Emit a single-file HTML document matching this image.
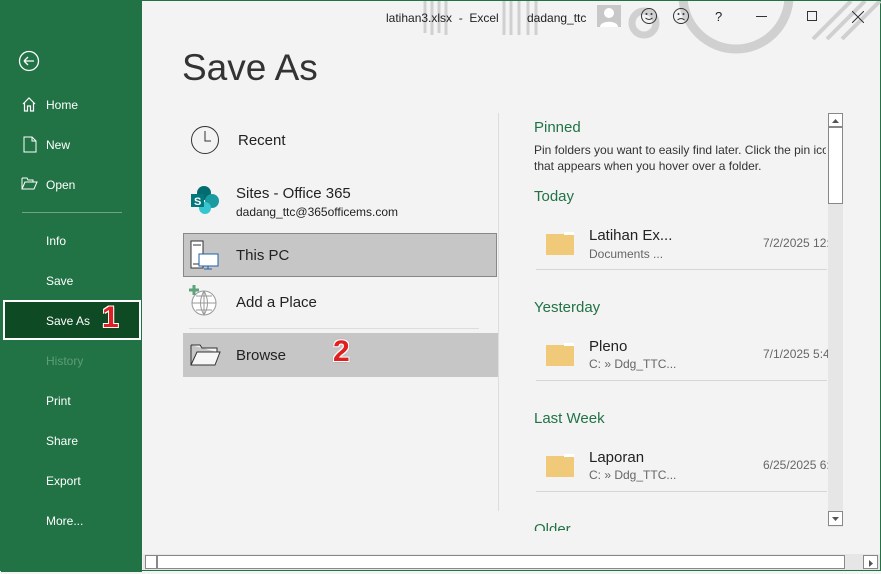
<!DOCTYPE html><html><head><style>
*{margin:0;padding:0;box-sizing:border-box}
body{width:881px;height:571px;overflow:hidden;background:#f3f3f3;font-family:"Liberation Sans",sans-serif;position:relative;border:1px solid #217346}
.a{position:absolute;white-space:nowrap}
.side{position:absolute;left:0;top:0;width:141px;height:571px;background:#217346}
.side .a{color:#fff;font-size:12px}
.g{color:#217346}
.d{color:#222}
.num{font-size:30px!important;font-weight:bold;color:#e02020!important;text-shadow:-1px -1px 0 #fff,1px -1px 0 #fff,-1px 1px 0 #fff,1px 1px 0 #fff,0 0 2px #600}
</style></head><body>
<svg class="a" style="left:0;top:0" width="881" height="60"><g stroke="#d0d0d0" fill="none"><path d="M424 0v32M431 0v34M438 0v32M445 0v34" stroke-width="3"/><path d="M503 0v34M510 0v34M518 0v34M527 0v34M535 0v34" stroke-width="3"/><circle cx="735" cy="-5" r="53" stroke-width="9"/><circle cx="643" cy="22" r="12" stroke-width="7"/><path d="M812 38l38-38M826 38l38-38M841 38l38-38" stroke-width="4"/></g></svg>
<div class="side">
<svg class="a" style="left:17px;top:49px" width="22" height="22"><circle cx="11" cy="11" r="9.5" fill="none" stroke="#fff" stroke-width="1.3"/><path d="M6 11h10M6 11l4-4M6 11l4 4" stroke="#fff" stroke-width="1.3" fill="none"/></svg>
<svg class="a" style="left:20px;top:95px" width="16" height="16"><path d="M2 8L8 2l6 6M3.5 7v8h3v-5h3v5h3V7" stroke="#fff" fill="none" stroke-width="1.2"/></svg>
<div class="a" style="left:45px;top:97px">Home</div>
<svg class="a" style="left:22px;top:135px" width="14" height="17"><path d="M1 1h8l4 4v11H1z M9 1v4h4" stroke="#fff" fill="none"/></svg>
<div class="a" style="left:45px;top:137px">New</div>
<svg class="a" style="left:20px;top:176px" width="18" height="14"><path d="M1 1h5l1 2h5v2M1 1v11h12l3-7H4L1 12" stroke="#fff" fill="none"/></svg>
<div class="a" style="left:45px;top:177px">Open</div>
<div class="a" style="left:21px;top:211px;width:100px;height:1px;background:#6fa585"></div>
<div class="a" style="left:45px;top:233px">Info</div>
<div class="a" style="left:45px;top:273px">Save</div>
<div class="a" style="left:2px;top:299px;width:138px;height:40px;background:#0e4a24;border:2px solid #fff"></div>
<div class="a" style="left:45px;top:313px">Save As</div>
<div class="a num" style="left:101px;top:300px">1</div>
<div class="a" style="left:45px;top:353px;color:#5e9d77!important">History</div>
<div class="a" style="left:45px;top:393px">Print</div>
<div class="a" style="left:45px;top:433px">Share</div>
<div class="a" style="left:45px;top:473px">Export</div>
<div class="a" style="left:45px;top:513px">More...</div>
</div>
<div class="a d" style="left:385px;top:10px;font-size:12px">latihan3.xlsx &nbsp;- &nbsp;Excel</div>
<div class="a d" style="left:526px;top:10px;font-size:12px">dadang_ttc</div>
<div class="a" style="left:596px;top:4px;width:24px;height:22px;background:#c8c8c8"><svg width="24" height="22"><circle cx="12" cy="8" r="5" fill="#fff"/><path d="M3 22c0-7 18-7 18 0z" fill="#fff"/></svg></div>
<svg class="a" style="left:639px;top:6px" width="18" height="18"><circle cx="9" cy="9" r="7.5" fill="none" stroke="#333"/><circle cx="6.5" cy="7" r="1" fill="#333"/><circle cx="11.5" cy="7" r="1" fill="#333"/><path d="M5.5 11q3.5 3 7 0" stroke="#333" fill="none"/></svg>
<svg class="a" style="left:671px;top:6px" width="18" height="18"><circle cx="9" cy="9" r="7.5" fill="none" stroke="#333"/><circle cx="6.5" cy="7" r="1" fill="#333"/><circle cx="11.5" cy="7" r="1" fill="#333"/><path d="M5.5 13q3.5 -3 7 0" stroke="#333" fill="none"/></svg>
<div class="a d" style="left:714px;top:8px;font-size:13px">?</div>
<div class="a" style="left:755px;top:15px;width:11px;height:1px;background:#333"></div>
<div class="a" style="left:806px;top:10px;width:10px;height:10px;border:1px solid #333"></div>
<svg class="a" style="left:851px;top:10px" width="12" height="12"><path d="M0 0l12 12M12 0L0 12" stroke="#333"/></svg>
<div class="a" style="left:181px;top:46px;font-size:37px;color:#333">Save As</div>
<svg class="a" style="left:189px;top:124px" width="30" height="30"><circle cx="15" cy="15" r="13.5" fill="none" stroke="#333" stroke-width="1"/><path d="M15 6v10h6" stroke="#333" fill="none"/></svg>
<div class="a d" style="left:237px;top:131px;font-size:15px">Recent</div>
<svg class="a" style="left:189px;top:184px" width="30" height="30"><circle cx="14" cy="8" r="7" fill="#036c70"/><circle cx="22" cy="16" r="7" fill="#1a9ba1"/><circle cx="15" cy="23" r="6" fill="#37c6d0"/><rect x="1" y="9" width="13" height="13" fill="#03787c"/><text x="4" y="20" font-size="11" font-weight="bold" fill="#fff" font-family="Liberation Sans">S</text></svg>
<div class="a d" style="left:235px;top:184px;font-size:15px">Sites - Office 365</div>
<div class="a d" style="left:235px;top:204px;font-size:12px">dadang_ttc@365officems.com</div>
<div class="a" style="left:182px;top:232px;width:314px;height:44px;background:#c6c6c6;border:1px solid #888"></div>
<svg class="a" style="left:189px;top:239px" width="30" height="30"><rect x="1" y="1" width="12" height="27" fill="#fff" stroke="#333"/><path d="M3 5h8M3 24h8" stroke="#333"/><rect x="9" y="14" width="19" height="12" fill="#fff" stroke="#1f5fa5"/><path d="M18 26v3M14 29h8" stroke="#1f5fa5"/></svg>
<div class="a d" style="left:235px;top:246px;font-size:15px">This PC</div>
<svg class="a" style="left:187px;top:284px" width="32" height="32"><circle cx="16" cy="18" r="12" fill="#fff" stroke="#999"/><path d="M4 18h24M16 6v24M8 11h16M8 25h16M16 6q-7 12 0 24M16 6q7 12 0 24" stroke="#999" fill="none"/><path d="M6 0v10M1 5h10" stroke="#5fa27b" stroke-width="3"/></svg>
<div class="a d" style="left:235px;top:293px;font-size:15px">Add a Place</div>
<div class="a" style="left:188px;top:327px;width:290px;height:1px;background:#ddd"></div>
<div class="a" style="left:182px;top:332px;width:315px;height:44px;background:#c6c6c6"></div>
<svg class="a" style="left:189px;top:343px" width="32" height="22"><path d="M1 1h9l2 3h15v4M1 1v20h24l5-13H7L1 21" stroke="#333" fill="#f6f6f6"/></svg>
<div class="a d" style="left:235px;top:346px;font-size:15px">Browse</div>
<div class="a num" style="left:332px;top:334px">2</div>
<div class="a" style="left:497px;top:112px;width:1px;height:398px;background:#ddd"></div>
<div class="a g" style="left:533px;top:118px;font-size:15px">Pinned</div>
<div class="a" style="left:533px;top:141px;width:292px;overflow:hidden;font-size:12px;color:#333;line-height:16px;height:32px">Pin folders you want to easily find later. Click the pin icon<br>that appears when you hover over a folder.</div>
<div class="a g" style="left:533px;top:187px;font-size:15px">Today</div>
<div class="a g" style="left:533px;top:298px;font-size:15px">Yesterday</div>
<div class="a g" style="left:533px;top:409px;font-size:15px">Last Week</div>
<div class="a" style="left:533px;top:520px;width:290px;height:10px;overflow:hidden"><div class="g" style="font-size:15px">Older</div></div>
<svg class="a" style="left:545px;top:230px" width="28" height="24"><path d="M0 3h28v21H0z" fill="#f0c979"/><path d="M18 1h10v3H18z" fill="#fff"/></svg>
<div class="a d" style="left:588px;top:226px;font-size:15px">Latihan Ex...</div>
<div class="a" style="left:588px;top:246px;font-size:12px;color:#666">Documents ...</div>
<div class="a" style="left:762px;top:235px;font-size:12px;color:#666">7/2/2025 12:</div>
<div class="a" style="left:535px;top:268px;width:291px;height:1px;background:#d6d6d6"></div>
<svg class="a" style="left:545px;top:341px" width="28" height="24"><path d="M0 3h28v21H0z" fill="#f0c979"/><path d="M18 1h10v3H18z" fill="#fff"/></svg>
<div class="a d" style="left:588px;top:337px;font-size:15px">Pleno</div>
<div class="a" style="left:588px;top:356px;font-size:12px;color:#666">C: » Ddg_TTC...</div>
<div class="a" style="left:762px;top:346px;font-size:12px;color:#666">7/1/2025 5:4</div>
<div class="a" style="left:535px;top:379px;width:291px;height:1px;background:#d6d6d6"></div>
<svg class="a" style="left:545px;top:452px" width="28" height="24"><path d="M0 3h28v21H0z" fill="#f0c979"/><path d="M18 1h10v3H18z" fill="#fff"/></svg>
<div class="a d" style="left:588px;top:448px;font-size:15px">Laporan</div>
<div class="a" style="left:588px;top:467px;font-size:12px;color:#666">C: » Ddg_TTC...</div>
<div class="a" style="left:762px;top:457px;font-size:12px;color:#666">6/25/2025 6:</div>
<div class="a" style="left:535px;top:490px;width:291px;height:1px;background:#d6d6d6"></div>
<div class="a" style="left:827px;top:112px;width:15px;height:414px;background:#e6e6e6"></div>
<div class="a" style="left:827px;top:112px;width:15px;height:14px;background:#fff;border:1px solid #888"><svg width="13" height="12"><path d="M3 8h7L6.5 4z" fill="#555"/></svg></div>
<div class="a" style="left:827px;top:126px;width:15px;height:77px;background:#fff;border:1px solid #888"></div>
<div class="a" style="left:827px;top:510px;width:15px;height:15px;background:#fff;border:1px solid #888"><svg width="13" height="13"><path d="M3 5h7L6.5 9z" fill="#555"/></svg></div>
<div class="a" style="left:142px;top:553px;width:737px;height:16px;background:#e6e6e6"></div>
<div class="a" style="left:144px;top:554px;width:12px;height:14px;background:#fff;border:1px solid #888"></div>
<div class="a" style="left:156px;top:554px;width:688px;height:14px;background:#fff;border:1px solid #888"></div>
<div class="a" style="left:862px;top:554px;width:15px;height:14px;background:#fff;border:1px solid #888"><svg width="13" height="12"><path d="M5 3v7l4-3.5z" fill="#555"/></svg></div>
</body></html>
